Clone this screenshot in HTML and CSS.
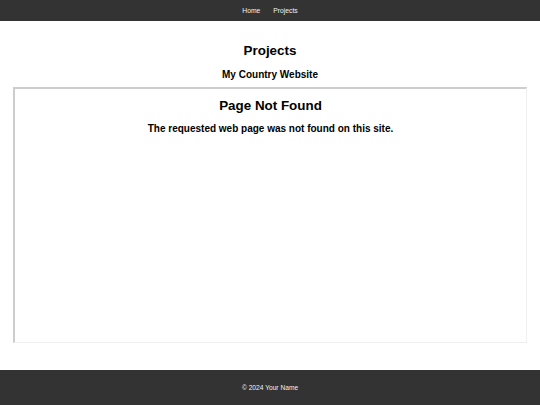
FILE: index.html
```html
<!DOCTYPE html>
<html lang="en">
<head>
<meta charset="utf-8">
<title>Projects</title>
<link rel="stylesheet" href="styles.css">
</head>
<body>
<nav class="topnav">
  <a href="#" class="nav-link">Home</a>
  <a href="#" class="nav-link">Projects</a>
</nav>
<main class="content">
  <h1 class="page-title">Projects</h1>
  <h2 class="page-subtitle">My Country Website</h2>
  <section class="frame">
    <h1 class="frame-title">Page Not Found</h1>
    <p class="frame-text">The requested web page was not found on this site.</p>
  </section>
</main>
<footer class="site-footer">© 2024 Your Name</footer>
</body>
</html>
```
FILE: styles.css
```css
html, body {
  margin: 0;
  padding: 0;
  background: #fff;
  font-family: "Liberation Sans", Arial, sans-serif;
  color: #000;
}
.topnav {
  height: 21px;
  background: #333;
  display: flex;
  justify-content: center;
  align-items: center;
  gap: 13px;
}
.nav-link {
  color: #f2f2f2;
  text-decoration: none;
  font-size: 6.75px;
  line-height: 21px;
}
.content {
  display: flex;
  flex-direction: column;
  padding-top: 22px;
}
.page-title {
  margin: 0;
  font-size: 13.4px;
  line-height: 16px;
  text-align: center;
  font-weight: bold;
}
.page-subtitle {
  margin: 10px 0 0;
  font-size: 10px;
  line-height: 12px;
  text-align: center;
  font-weight: bold;
}
.frame {
  box-sizing: border-box;
  margin: 6px 13px 0;
  height: 256px;
  border-top: 2px solid #cdcdcd;
  border-left: 2px solid #cdcdcd;
  border-right: 1px solid #efefef;
  border-bottom: 1px solid #efefef;
  padding-top: 9px;
  display: flex;
  flex-direction: column;
  align-items: center;
}
.frame-title {
  margin: 0;
  font-size: 13.4px;
  line-height: 16px;
  font-weight: bold;
}
.frame-text {
  margin: 9px 0 0;
  font-size: 10px;
  line-height: 12px;
  font-weight: bold;
}
.site-footer {
  margin-top: 27px;
  height: 35px;
  line-height: 35px;
  background: #333;
  color: #f2f2f2;
  text-align: center;
  font-size: 6.65px;
}
```
